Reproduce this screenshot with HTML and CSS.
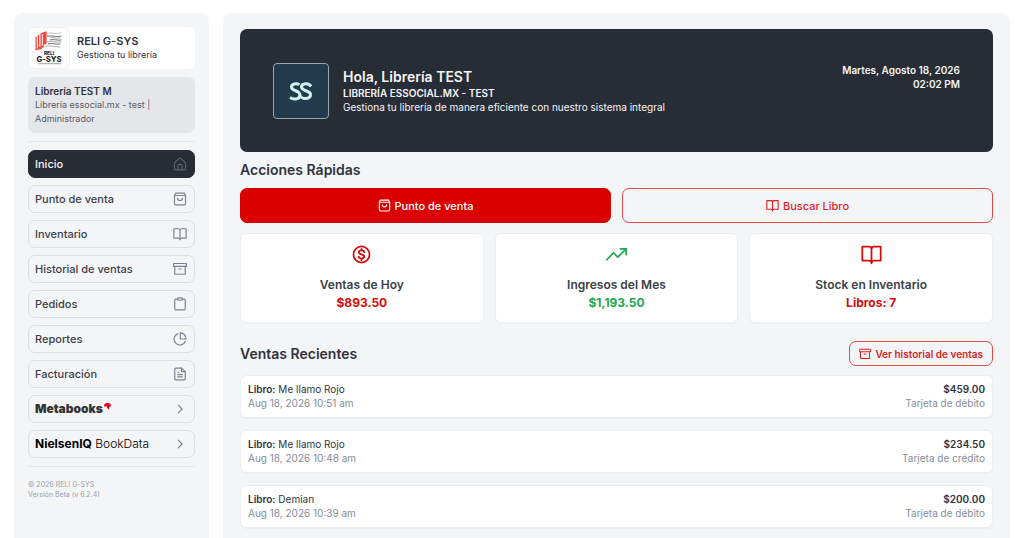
FILE: index.html
```html
<!DOCTYPE html>
<html lang="es">
<head>
    <meta charset="UTF-8">
    <meta name="viewport" content="width=device-width, initial-scale=1.0">
    <title>RELI G-SYS</title>
    <link rel="stylesheet" href="styles.css">
</head>
<body>
    <!-- Iconos compartidos -->
    <svg class="sprite" aria-hidden="true">
        <symbol id="icon-home" viewBox="0 0 24 24">
            <path d="M2.500 11a3 3 0 0 1 1-2.200l6.700-6a2.700 2.700 0 0 1 3.600 0l6.700 6a3 3 0 0 1 1 2.200v9a2 2 0 0 1-2 2h-15a2 2 0 0 1-2-2z"/>
            <path d="M8.500 22v-7.500a2 2 0 0 1 2-2h3a2 2 0 0 1 2 2V22"/>
        </symbol>
        <symbol id="icon-bag" viewBox="0 0 24 24">
            <path d="M2.500 6 4.500 2h15l2 4v13.500A2.500 2.500 0 0 1 19 22H5a2.500 2.500 0 0 1-2.500-2.500z"/>
            <path d="M2.500 6h19"/>
            <path d="M8 10.500a4 4 0 0 0 8 0"/>
        </symbol>
        <symbol id="icon-book" viewBox="0 0 24 24">
            <path d="M12 5a3 3 0 0 0-3-2H1.500v16H9a3 3 0 0 1 3 2 3 3 0 0 1 3-2h7.500V3H15a3 3 0 0 0-3 2z"/>
            <path d="M12 5v17"/>
        </symbol>
        <symbol id="icon-archive" viewBox="0 0 24 24">
            <path d="M1 2.500h22v5H1z"/>
            <path d="M3 7.500V21h18V7.500"/>
            <path d="M10 12h4"/>
        </symbol>
        <symbol id="icon-clipboard" viewBox="0 0 24 24">
            <path d="M16 3.500h3a2 2 0 0 1 2 2V20a2 2 0 0 1-2 2H5a2 2 0 0 1-2-2V5.500a2 2 0 0 1 2-2h3"/>
            <rect x="8" y="1.500" width="8" height="4" rx="1"/>
        </symbol>
        <symbol id="icon-pie" viewBox="0 0 24 24">
            <path d="M8.500 2.800A10 10 0 1 0 21.200 15.800"/>
            <path d="M12.500 1.500A10.300 10.300 0 0 1 22.500 12h-10z"/>
        </symbol>
        <symbol id="icon-file" viewBox="0 0 24 24">
            <path d="M14.500 2H5a2 2 0 0 0-2 2v16a2 2 0 0 0 2 2h14a2 2 0 0 0 2-2V8z"/>
            <path d="M14.500 2v6H21M8 9h2M8 13h8M8 17h8"/>
        </symbol>
        <symbol id="icon-chevron" viewBox="0 0 24 24">
            <path d="m9 18.500 6.500-6.500L9 5.500"/>
        </symbol>
        <symbol id="icon-dollar" viewBox="0 0 24 24">
            <circle cx="12" cy="12" r="9.200"/>
            <path d="M15 9.300c0-1.200-1.300-2-3-2s-3 .800-3 2.100c0 3.200 6.200 1.800 6.200 5 0 1.300-1.400 2.200-3.200 2.200s-3.200-.900-3.200-2.200M12 5.500v1.800M12 16.700v1.800"/>
        </symbol>
        <symbol id="icon-trend" viewBox="0 0 24 24">
            <path d="m1 18 7.500-8 5 5L22.500 6"/>
            <path d="M16.500 5.500H23V12"/>
        </symbol>
    </svg>

    <div class="layout">
        <aside class="sidebar">
            <div class="brand">
                <svg class="brand-logo" viewBox="0 0 42 42" role="img" aria-label="RELI G-SYS">
                    <g fill="none" stroke="#ee3e34" stroke-width="1.300">
                        <path d="M7.500 9v13.500l6-1M10 7v13.500l6-1"/>
                    </g>
                    <path d="M12 5.500 18.500 3.500v13l-3 1v2L12 21z" fill="#ee4a42"/>
                    <path d="M14 6.500v12" stroke="#ffffff" stroke-width="1"/>
                    <g fill="none" stroke-width="1">
                        <path d="M19 5.500c5-1 9 1.500 15-.500" stroke="#bbb"/>
                        <path d="M19 8.500c6-1 9 1.500 15 0M22 12.500c5-1 8 1 12 0M20 16.500c5-1 9 1.500 13 0" stroke="#666"/>
                        <path d="M22 10.500c5-1 7 1 11 0M18 14.500c7-1 9 1 16 0M17 19c5-1 9 1 16 1" stroke="#aaa"/>
                    </g>
                    <text x="21" y="28" font-size="5" text-anchor="middle" font-weight="800">RELI</text>
                    <text x="21" y="36" font-size="8" text-anchor="middle" font-weight="800">G-SYS</text>
                    <path d="M10 37.500h24" stroke="#999" stroke-width="1"/>
                </svg>
                <div class="brand-text">
                    <strong>RELI G-SYS</strong>
                    <span>Gestiona tu librería</span>
                </div>
            </div>

            <div class="account">
                <strong>Librería TEST M</strong>
                <span>Librería essocial.mx - test | Administrador</span>
            </div>

            <nav class="menu">
                <a class="menu-item active" href="#">Inicio <svg class="icon"><use href="#icon-home"/></svg></a>
                <a class="menu-item" href="#">Punto de venta <svg class="icon"><use href="#icon-bag"/></svg></a>
                <a class="menu-item" href="#">Inventario <svg class="icon"><use href="#icon-book"/></svg></a>
                <a class="menu-item" href="#">Historial de ventas <svg class="icon"><use href="#icon-archive"/></svg></a>
                <a class="menu-item" href="#">Pedidos <svg class="icon"><use href="#icon-clipboard"/></svg></a>
                <a class="menu-item" href="#">Reportes <svg class="icon"><use href="#icon-pie"/></svg></a>
                <a class="menu-item" href="#">Facturación <svg class="icon"><use href="#icon-file"/></svg></a>
                <a class="menu-item" href="#">
                    <span class="metabooks">Metabooks<svg class="metabooks-mark" viewBox="0 0 7 7"><path d="M0 3.500C0 1 1 0 3.500 0S7 1 7 3.500H5.500L5 6.500 3 5V3.500z"/></svg></span>
                    <svg class="icon"><use href="#icon-chevron"/></svg>
                </a>
                <a class="menu-item" href="#">
                    <span class="nielsen"><b>NielsenIQ</b> BookData</span>
                    <svg class="icon"><use href="#icon-chevron"/></svg>
                </a>
            </nav>

            <footer class="footer">
                <p>© 2026 RELI G-SYS</p>
                <p>Versión Beta (v 6.2.4)</p>
            </footer>
        </aside>

        <main class="content">
            <header class="hero">
                <svg class="hero-logo" viewBox="0 0 54 54" role="img" aria-label="Librería TEST">
                    <g fill="none" stroke="#d3f1f2" stroke-width="3">
                        <path d="M25.500 20.500C22 18.800 17.500 20 17.500 23c0 4.500 8.500 3 8.500 8 0 4.500-6 5-10 2.500"/>
                        <path d="M37 22.500C35 18.500 27.500 19 27.500 23c0 4.500 9 3 9 7.500 0 5-8 5-10.500 1.500"/>
                    </g>
                </svg>
                <div class="hero-text">
                    <h1>Hola, Librería TEST</h1>
                    <h2>LIBRERÍA ESSOCIAL.MX - TEST</h2>
                    <p>Gestiona tu librería de manera eficiente con nuestro sistema integral</p>
                </div>
                <div class="hero-date">
                    <p>Martes, Agosto 18, 2026</p>
                    <p>02:02 PM</p>
                </div>
            </header>

            <h3 class="section-title">Acciones Rápidas</h3>
            <div class="actions">
                <button class="btn btn-primary" type="button"><svg class="icon"><use href="#icon-bag"/></svg>Punto de venta</button>
                <button class="btn" type="button"><svg class="icon"><use href="#icon-book"/></svg>Buscar Libro</button>
            </div>

            <div class="stats">
                <div class="card stat">
                    <svg class="icon"><use href="#icon-dollar"/></svg>
                    <h4>Ventas de Hoy</h4>
                    <p>$893.50</p>
                </div>
                <div class="card stat green">
                    <svg class="icon"><use href="#icon-trend"/></svg>
                    <h4>Ingresos del Mes</h4>
                    <p>$1,193.50</p>
                </div>
                <div class="card stat">
                    <svg class="icon"><use href="#icon-book"/></svg>
                    <h4>Stock en Inventario</h4>
                    <p>Libros: 7</p>
                </div>
            </div>

            <div class="recent-header">
                <h3 class="section-title">Ventas Recientes</h3>
                <button class="btn btn-small" type="button"><svg class="icon"><use href="#icon-archive"/></svg>Ver historial de ventas</button>
            </div>
            <div class="sales">
                <div class="card sale">
                    <div>
                        <p><b>Libro:</b> Me llamo Rojo</p>
                        <p class="muted">Aug 18, 2026 10:51 am</p>
                    </div>
                    <div class="sale-total">
                        <p><b>$459.00</b></p>
                        <p class="muted">Tarjeta de débito</p>
                    </div>
                </div>
                <div class="card sale">
                    <div>
                        <p><b>Libro:</b> Me llamo Rojo</p>
                        <p class="muted">Aug 18, 2026 10:48 am</p>
                    </div>
                    <div class="sale-total">
                        <p><b>$234.50</b></p>
                        <p class="muted">Tarjeta de crédito</p>
                    </div>
                </div>
                <div class="card sale">
                    <div>
                        <p><b>Libro:</b> Demian</p>
                        <p class="muted">Aug 18, 2026 10:39 am</p>
                    </div>
                    <div class="sale-total">
                        <p><b>$200.00</b></p>
                        <p class="muted">Tarjeta de débito</p>
                    </div>
                </div>
            </div>
        </main>
    </div>
</body>
</html>
```
FILE: styles.css
```css
* {
    box-sizing: border-box;
}

body {
    font-family: Inter, "Liberation Sans", sans-serif;
    font-size: 10px;
    line-height: 14px;
    color: #2f333d;
    background-color: #ffffff;
    margin: 0;
}

h1, h2, h3, h4, p {
    margin: 0;
}

.sprite {
    display: none;
}

.icon {
    width: 14px;
    height: 14px;
    flex: none;
    fill: none;
    stroke: currentColor;
    stroke-width: 2;
    stroke-linecap: round;
    stroke-linejoin: round;
}

.layout {
    display: flex;
    gap: 14px;
    min-height: 100vh;
    padding: 13px 14px 0;
}

.sidebar,
.content {
    background-color: #f4f5f7;
    border-radius: 8px 8px 0 0;
}

/* Barra lateral */
.sidebar {
    width: 195px;
    flex: none;
    padding: 14px;
}

.brand {
    display: flex;
    align-items: center;
    gap: 7px;
    background-color: #ffffff;
    border-radius: 6px;
}

.brand-logo {
    width: 42px;
    height: 42px;
    border: 1px solid #eceef1;
    border-radius: 6px;
    fill: #2b2b2b;
}

.brand-text strong,
.brand-text span,
.account strong,
.account span {
    display: block;
}

.brand-text strong {
    font-size: 11px;
    font-weight: 600;
}

.brand-text span {
    font-size: 9px;
}

.account {
    margin-top: 8px;
    padding: 7px;
    background-color: #e5e6ea;
    border-radius: 7px;
}

.account strong {
    font-weight: 600;
}

.account span {
    font-size: 9px;
    color: #555a64;
}

.menu {
    display: flex;
    flex-direction: column;
    gap: 7px;
    margin-top: 8px;
    padding: 8px 0;
    border-top: 1px solid #e5e7eb;
    border-bottom: 1px solid #e5e7eb;
}

.menu-item {
    display: flex;
    align-items: center;
    justify-content: space-between;
    height: 28px;
    padding: 0 7px 0 6px;
    border: 1px solid #dcdee2;
    border-radius: 7px;
    font-size: 11px;
    font-weight: 500;
    color: #3b3f49;
    text-decoration: none;
}

.menu-item .icon {
    color: #7b818e;
}

.menu-item.active {
    background-color: #282c35;
    border-color: #282c35;
    color: #f4f5f7;
}

.menu-item.active .icon {
    color: #5c626e;
}

.metabooks {
    font-size: 12px;
    font-weight: 900;
    color: #333333;
}

.metabooks-mark {
    width: 7px;
    height: 7px;
    margin-left: 1px;
    vertical-align: 3px;
    fill: #e3001b;
}

.nielsen {
    font-size: 12px;
    font-weight: 300;
    color: #000000;
}

.nielsen b {
    font-weight: 700;
}

.footer {
    margin-top: 13px;
    font-size: 7px;
    line-height: 10px;
    color: #9da1aa;
}

/* Contenido principal */
.content {
    flex: 1;
    min-width: 0;
    padding: 16px 17px 10px;
}

.hero {
    display: flex;
    align-items: center;
    gap: 14px;
    padding: 34px 33px 33px;
    background-color: #282c35;
    border-radius: 7px;
    color: #f4f5f7;
}

.hero-logo {
    width: 56px;
    height: 56px;
    flex: none;
    background-color: #213b4d;
    border: 1px solid #9aa3ad;
    border-radius: 4px;
}

.hero h1 {
    font-size: 14px;
    line-height: 18px;
    font-weight: 600;
}

.hero h2 {
    font-size: 10px;
    font-weight: 600;
}

.hero-date {
    margin-left: auto;
    align-self: flex-start;
    font-weight: 600;
    text-align: right;
}

.section-title {
    font-size: 14px;
    line-height: 20px;
    font-weight: 600;
}

.content > .section-title {
    margin: 8px 0;
}

.actions,
.stats {
    display: grid;
    grid-template-columns: 1fr 1fr;
    gap: 11px;
}

.stats {
    grid-template-columns: 1fr 1fr 1fr;
    margin-top: 10px;
}

.btn {
    display: flex;
    align-items: center;
    justify-content: center;
    gap: 4px;
    height: 35px;
    padding: 0 9px;
    background-color: transparent;
    border: 1px solid #e14a4a;
    border-radius: 7px;
    font-family: inherit;
    font-size: 11px;
    font-weight: 500;
    color: #db1f1f;
    cursor: pointer;
}

.btn .icon {
    width: 13px;
    height: 13px;
}

.btn-primary {
    background-color: #db0000;
    border-color: #db0000;
    color: #ffffff;
}

.btn-small {
    height: 25px;
    font-size: 10px;
    font-weight: 600;
}

.btn-small .icon {
    width: 12px;
    height: 12px;
}

.card {
    background-color: #ffffff;
    border: 1px solid #eceef1;
    border-radius: 6px;
    box-shadow: 0 1px 1px rgba(0, 0, 0, 0.03);
}

.stat {
    display: flex;
    flex-direction: column;
    align-items: center;
    padding: 10px;
    color: #d40b0b;
}

.stat .icon {
    width: 21px;
    height: 21px;
    margin-bottom: 11px;
}

.stat h4,
.stat p {
    font-size: 12px;
    line-height: 18px;
    font-weight: 600;
}

.stat h4 {
    color: #3b3f49;
}

.stat p {
    font-weight: 700;
}

.stat.green {
    color: #1fa751;
}

.recent-header {
    display: flex;
    align-items: center;
    justify-content: space-between;
    margin: 18px 0 9px;
}

.sales {
    display: flex;
    flex-direction: column;
    gap: 12px;
}

.sale {
    display: flex;
    justify-content: space-between;
    padding: 6px 7px;
}

.sale > div {
    padding-bottom: 1px;
}

.sale-total {
    text-align: right;
}

.sale b {
    font-weight: 600;
}

.muted {
    color: #868c98;
}
```
